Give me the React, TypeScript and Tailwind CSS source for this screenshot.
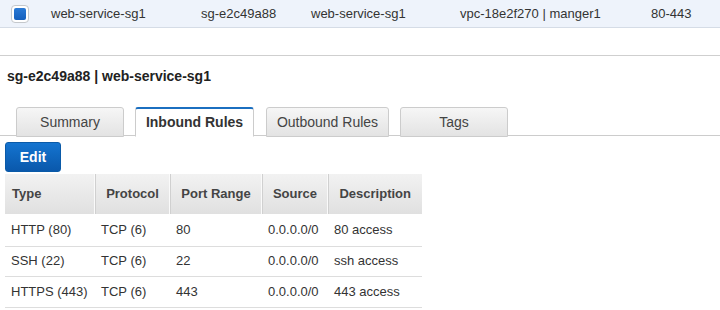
import clsx from 'clsx';

const topCells = [
  { text: 'web-service-sg1', w: 'w-[150px]' },
  { text: 'sg-e2c49a88', w: 'w-[110px]' },
  { text: 'web-service-sg1', w: 'w-[149px]' },
  { text: 'vpc-18e2f270 | manger1', w: 'w-[191px]' },
  { text: '80-443', w: 'w-[60px]' },
];

const tabs = [
  { label: 'Summary', className: 'ml-[16px] w-[108px]' },
  { label: 'Inbound Rules', className: 'ml-[11px] w-[119px]', active: true },
  { label: 'Outbound Rules', className: 'ml-[12px] w-[123px]' },
  { label: 'Tags', className: 'ml-[11px] w-[108px]' },
];

const columns = [
  { label: 'Type', w: 'w-[90px]' },
  { label: 'Protocol', w: 'w-[75px]' },
  { label: 'Port Range', w: 'w-[92px]' },
  { label: 'Source', w: 'w-[66px]' },
  { label: 'Description', w: 'w-[94px]' },
];

const rules = [
  { cells: ['HTTP (80)', 'TCP (6)', '80', '0.0.0.0/0', '80 access'], h: 'h-[32px]' },
  { cells: ['SSH (22)', 'TCP (6)', '22', '0.0.0.0/0', 'ssh access'], h: 'h-[30px]' },
  { cells: ['HTTPS (443)', 'TCP (6)', '443', '0.0.0.0/0', '443 access'], h: 'h-[31px]' },
];

export default function App() {
  return (
    <div className="w-[720px] h-[310px] overflow-hidden bg-white font-['Liberation_Sans',Arial,sans-serif] text-[13px] text-[#333]">
      {/* selected row of the list */}
      <div className="flex h-[28px] items-center border-b border-[#d5dce6] bg-[#eef3fb]">
        <div className="ml-[11px] mr-[22px] flex h-[18px] w-[18px] items-center justify-center rounded-[4px] border border-[#c4c8cc] bg-white">
          <div className="h-[12px] w-[12px] rounded-[2px] bg-gradient-to-b from-[#2a7ad6] to-[#1560bd]" />
        </div>
        {topCells.map((c, i) => (
          <div key={i} className={clsx('shrink-0', c.w)}>
            {c.text}
          </div>
        ))}
      </div>
      <div className="h-[28px] border-b border-[#cfcfcf]" />

      <div className="mt-[12px] pl-[7px] text-[14px] font-bold leading-[16px] text-[#222]">
        sg-e2c49a88 | web-service-sg1
      </div>

      {/* tabs */}
      <div className="mt-[23px] flex h-[29px] shrink-0 items-start border-b border-[#cccccc]">
        {tabs.map((t) => (
          <div
            key={t.label}
            className={clsx(
              'flex h-[30px] shrink-0 items-center justify-center rounded-t-[3px] border text-[14px]',
              t.className,
              t.active
                ? 'border-[#cccccc] border-t-2 border-t-[#1b6fc0] border-b-white bg-white font-bold text-[#333]'
                : 'border-[#cccccc] bg-gradient-to-b from-[#f6f6f6] to-[#e3e3e3] text-[#444]',
            )}
          >
            {t.label}
          </div>
        ))}
      </div>

      <button className="ml-[5px] mt-[6px] flex h-[30px] w-[56px] items-center justify-center rounded-[3px] border border-[#0a5aa8] bg-gradient-to-b from-[#1474d0] to-[#0a58ab] text-[14px] font-bold text-white">
        Edit
      </button>

      {/* inbound rules table */}
      <table className="ml-[5px] mt-[2px] table-fixed border-collapse">
        <thead>
          <tr className="h-[40px] bg-gradient-to-b from-[#f2f2f2] to-[#e0e0e0]">
            {columns.map((c, i) => (
              <th
                key={c.label}
                className={clsx(
                  'p-0 text-[13px] font-bold text-[#444]',
                  c.w,
                  i === 0 ? 'pl-[7px] text-left' : 'text-center',
                  i < columns.length - 1 && 'border-r border-r-[#d0d0d0] shadow-[inset_-1px_0_0_#fafafa]',
                )}
              >
                {c.label}
              </th>
            ))}
          </tr>
        </thead>
        <tbody>
          {rules.map((r) => (
            <tr key={r.cells[0]} className={clsx('border-b border-[#dddddd]', r.h)}>
              {r.cells.map((cell, j) => (
                <td key={j} className="whitespace-nowrap p-0 pl-[6px] text-[13px] text-[#333]">
                  {cell}
                </td>
              ))}
            </tr>
          ))}
        </tbody>
      </table>
    </div>
  );
}
